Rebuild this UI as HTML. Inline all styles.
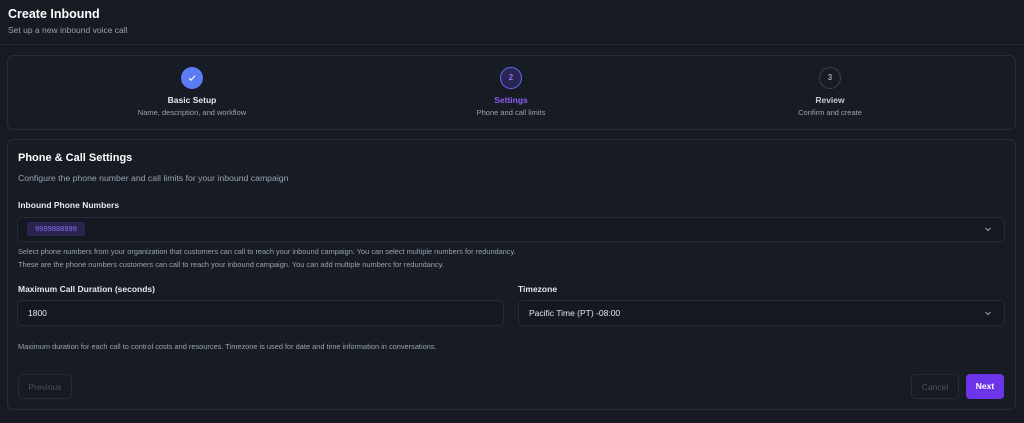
<!DOCTYPE html><html><head><style>
*{margin:0;padding:0;box-sizing:border-box}
body{width:1024px;height:423px;background:#151a23;font-family:"Liberation Sans",sans-serif;color:#e6e8ec;position:relative;overflow:hidden}
.a{position:absolute;white-space:nowrap}
.card{position:absolute;border:1px solid #272d38;border-radius:6px;background:#161b24}
.c{position:absolute;width:22px;height:22px;border-radius:50%;text-align:center;line-height:20px;font-size:8px;font-weight:bold}
.lab{font-size:8.5px;font-weight:bold;text-align:center;width:200px}
.sub{font-size:7.5px;color:#9aa3b0;text-align:center;width:200px}
.box{position:absolute;border:1px solid #262c37;border-radius:5px;background:#141921}
.h{font-size:7.4px;color:#9aa3b0}
.fl{font-size:8.5px;font-weight:bold;color:#e6e8ec}
</style></head><body>
<div class="a" style="left:8px;top:7px;font-size:12.5px;font-weight:bold;color:#fff">Create Inbound</div>
<div class="a" style="left:8px;top:25px;font-size:8.5px;color:#9aa3b0">Set up a new inbound voice call</div>
<div class="a" style="left:0;top:44px;width:1024px;height:1px;background:#232934"></div>
<div class="card" style="left:7px;top:55px;width:1009px;height:75px"></div>
<div class="c" style="left:181px;top:67px;background:#5b7cf5;color:#fff;line-height:22px"><svg width="10" height="10" viewBox="0 0 10 10" style="margin-top:6px"><path d="M2 5.2l2 2 4-4.5" stroke="#fff" stroke-width="1.1" fill="none"/></svg></div>
<div class="c" style="left:500px;top:67px;border:1.5px solid #5b6cf0;background:#2a2555;color:#8b6cf5">2</div>
<div class="c" style="left:819px;top:67px;border:1px solid #3a404b;color:#9aa3b0">3</div>
<div class="a lab" style="left:92px;top:95px">Basic Setup</div>
<div class="a sub" style="left:92px;top:108px">Name, description, and workflow</div>
<div class="a lab" style="left:411px;top:95px;color:#8b5cf6">Settings</div>
<div class="a sub" style="left:411px;top:108px">Phone and call limits</div>
<div class="a lab" style="left:730px;top:95px;color:#c6cbd3">Review</div>
<div class="a sub" style="left:730px;top:108px">Confirm and create</div>
<div class="card" style="left:7px;top:139px;width:1009px;height:271px"></div>
<div class="a" style="left:18px;top:152px;font-size:11px;font-weight:bold;color:#fff">Phone &amp; Call Settings</div>
<div class="a" style="left:18px;top:173px;font-size:8.7px;color:#9aa3b0">Configure the phone number and call limits for your inbound campaign</div>
<div class="a fl" style="left:18px;top:200px">Inbound Phone Numbers</div>
<div class="box" style="left:17px;top:217px;width:988px;height:25px"></div>
<div class="a" style="left:27px;top:222px;width:58px;height:14px;background:#2b2450;border-radius:2px;color:#8b6cf5;font-size:7.5px;text-align:center;line-height:14px">9999888999</div>
<svg class="a" style="left:984px;top:225px" width="8" height="8" viewBox="0 0 8 8"><path d="M1.5 3l2.5 2.5L6.5 3" stroke="#9aa3b0" fill="none"/></svg>
<div class="a h" style="left:18px;top:247px">Select phone numbers from your organization that customers can call to reach your inbound campaign. You can select multiple numbers for redundancy.</div>
<div class="a h" style="left:18px;top:260px">These are the phone numbers customers can call to reach your inbound campaign. You can add multiple numbers for redundancy.</div>
<div class="a fl" style="left:18px;top:284px">Maximum Call Duration (seconds)</div>
<div class="a fl" style="left:518px;top:284px">Timezone</div>
<div class="box" style="left:17px;top:300px;width:487px;height:26px"></div>
<div class="a" style="left:28px;top:308px;font-size:8.5px">1800</div>
<div class="box" style="left:518px;top:300px;width:487px;height:26px"></div>
<div class="a" style="left:529px;top:308px;font-size:8.5px">Pacific Time (PT) -08:00</div>
<svg class="a" style="left:984px;top:309px" width="8" height="8" viewBox="0 0 8 8"><path d="M1.5 3l2.5 2.5L6.5 3" stroke="#9aa3b0" fill="none"/></svg>
<div class="a h" style="left:18px;top:342px">Maximum duration for each call to control costs and resources. Timezone is used for date and time information in conversations.</div>
<div class="box" style="left:18px;top:374px;width:54px;height:25px;background:#151a23;font-size:8.5px;color:#4b525e;text-align:center;line-height:24px">Previous</div>
<div class="box" style="left:911px;top:374px;width:48px;height:25px;background:#151a23;font-size:8.5px;color:#4b525e;text-align:center;line-height:24px">Cancel</div>
<div class="a" style="left:966px;top:374px;width:38px;height:25px;background:#6d35e8;border-radius:4px;font-size:8.5px;font-weight:bold;color:#fff;text-align:center;line-height:25px">Next</div>
</body></html>
